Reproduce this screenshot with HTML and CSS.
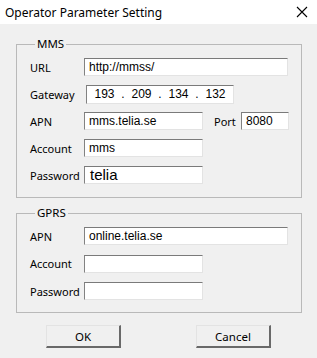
FILE: index.html
```html
<!DOCTYPE html>
<html lang="en">
<head>
<meta charset="UTF-8">
<title>Operator Parameter Setting</title>
<link rel="stylesheet" href="styles.css">
</head>
<body>
<div class="titlebar">
    <span class="title">Operator Parameter Setting</span>
    <svg class="close" width="12" height="12" viewBox="0 0 12 12">
        <path d="M1 1 L11 11 M11 1 L1 11" stroke="#000" stroke-width="1.1" fill="none"/>
    </svg>
</div>
<div class="dialog">
    <fieldset class="group mms">
        <legend>MMS</legend>
        <div class="row">
            <label>URL</label>
            <div class="field wide">http://mmss/</div>
        </div>
        <div class="row">
            <label>Gateway</label>
            <div class="field ip">
                <span>193</span><span class="dot">.</span>
                <span>209</span><span class="dot">.</span>
                <span>134</span><span class="dot">.</span>
                <span>132</span>
            </div>
        </div>
        <div class="row">
            <label>APN</label>
            <div class="field short">mms.telia.se</div>
            <label class="port-label">Port</label>
            <div class="field port">8080</div>
        </div>
        <div class="row">
            <label>Account</label>
            <div class="field short">mms</div>
        </div>
        <div class="row">
            <label>Password</label>
            <div class="field short big">telia</div>
        </div>
    </fieldset>

    <fieldset class="group gprs">
        <legend>GPRS</legend>
        <div class="row">
            <label>APN</label>
            <div class="field wide">online.telia.se</div>
        </div>
        <div class="row">
            <label>Account</label>
            <div class="field short"></div>
        </div>
        <div class="row">
            <label>Password</label>
            <div class="field short"></div>
        </div>
    </fieldset>

    <div class="buttons">
        <button>OK</button>
        <button>Cancel</button>
    </div>
</div>
</body>
</html>
```

FILE: styles.css
```css
body {
    margin: 0;
    width: 317px;
    height: 358px;
    background-color: #f0f0f0;
    font-family: "Noto Sans", "Open Sans", sans-serif;
    font-size: 11px;
    color: #000;
    overflow: hidden;
}
.titlebar {
    height: 24px;
    background-color: #fff;
    display: flex;
    align-items: center;
    justify-content: space-between;
    padding: 0 9px 0 5px;
}
.title {
    font-size: 12px;
}
.dialog {
    padding: 12px 15px 0 16px;
}
.group {
    margin: 0;
    padding: 6px 0 13px 13px;
    border: 1px solid #b9b9b9;
    display: flex;
    flex-direction: column;
    gap: 9px;
}
.mms {
    margin-bottom: 7px;
}
.gprs {
    gap: 9.5px;
    padding-bottom: 12px;
    margin-bottom: 12px;
}
.group legend {
    padding: 0 2px;
    margin-left: 5px;
    line-height: 16px;
    font-size: 11.5px;
}
.row {
    display: flex;
    align-items: center;
    height: 18px;
}
.row label {
    width: 54px;
    flex-shrink: 0;
}
.field {
    box-sizing: border-box;
    height: 18px;
    background-color: #fff;
    border-style: solid;
    border-width: 1px;
    border-color: #7a7a7a #e3e3e3 #e3e3e3 #828282;
    font-family: "Liberation Sans", Arial, sans-serif;
    font-size: 12px;
    line-height: 16px;
    padding-left: 4px;
    white-space: nowrap;
}
.wide {
    width: 204px;
}
.short {
    width: 119px;
}
.big {
    font-size: 15px;
    padding-left: 5px;
}
.ip {
    width: 148px;
    margin-left: 2px;
    height: 19px;
    display: flex;
    padding-left: 6px;
}
.ip span {
    width: 23px;
    text-align: center;
}
.ip .dot {
    width: 14px;
}
.row .port-label {
    width: 27px;
    margin-left: 11px;
}
.port {
    width: 48px;
    flex-shrink: 0;
}
.buttons {
    display: flex;
    justify-content: center;
    gap: 75px;
    padding-right: 1px;
}
button {
    width: 75px;
    height: 23px;
    font-family: "Noto Sans", "Open Sans", sans-serif;
    font-size: 11.5px;
    color: #000;
    background-color: #f0f0f0;
    border-style: solid;
    border-width: 1px 2px 2px 1px;
    border-color: #e3e3e3 #696969 #696969 #e3e3e3;
    padding: 0;
}
```
